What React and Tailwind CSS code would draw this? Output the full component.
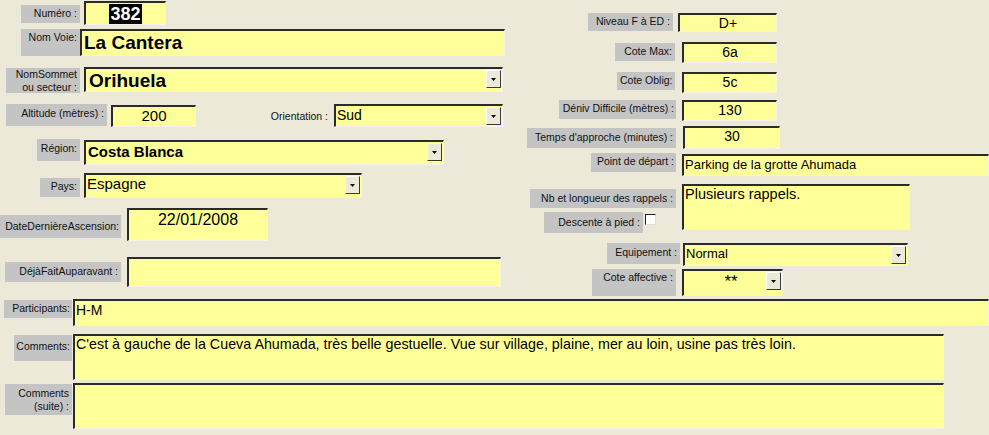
const Label = ({ className = "", children }) => (
  <div
    className={`shrink-0 whitespace-nowrap bg-[#c4c4c4] px-[3px] pt-[2px] text-right text-[10.5px] leading-[13px] text-[#111] ${className}`}
  >
    {children}
  </div>
);

const Field = ({ className = "", children }) => (
  <div
    className={`shrink-0 overflow-hidden border-t-2 border-l-2 border-r border-b border-t-[#2b2b2b] border-l-[#2b2b2b] border-r-[#f6f4ea] border-b-[#f6f4ea] bg-[#ffff99] text-black ${className}`}
  >
    {children}
  </div>
);

const DropButton = () => (
  <div className="mr-[1px] mt-[1px] flex h-[18px] w-[15px] shrink-0 items-center justify-center border border-t-white border-l-white border-r-[#3a3a3a] border-b-[#3a3a3a] bg-[#ece9d8]">
    <svg width="5" height="3" viewBox="0 0 5 3">
      <path d="M0 0h5L2.5 3z" fill="#000" />
    </svg>
  </div>
);

const Combo = ({ className = "", textClass = "", children }) => (
  <Field className={`flex ${className}`}>
    <div className={`min-w-0 flex-1 ${textClass}`}>{children}</div>
    <DropButton />
  </Field>
);

export default function App() {
  return (
    <div className="h-[435px] w-[989px] overflow-hidden bg-[#ece9d8] font-['Liberation_Sans',Arial,sans-serif]">
      <div className="flex h-[299px]">
        {/* left column */}
        <div className="flex w-[510px] shrink-0 flex-col">
          <div className="mt-[1px] flex">
            <Label className="ml-[21px] mt-[4px] h-[18px] w-[59px]">Numéro :</Label>
            <Field className="ml-[4px] flex h-[24px] w-[82px] items-start justify-center">
              <span className="mt-[1px] bg-black px-[1px] text-[18px] font-bold leading-[20px] text-white">382</span>
            </Field>
          </div>
          <div className="mt-[4px] flex">
            <Label className="ml-[21px] h-[27px] w-[59px]">Nom Voie:</Label>
            <Field className="h-[27px] w-[425px] pl-[2px] text-[19px] font-bold leading-[24px]">La Cantera</Field>
          </div>
          <div className="mt-[11px] flex">
            <Label className="ml-[6px] mt-[1px] h-[25px] w-[74px] !pt-0 leading-[12px]">
              NomSommet
              <br />
              ou secteur :
            </Label>
            <Combo className="ml-[4px] h-[25px] w-[419px]" textClass="pl-[3px] text-[19px] font-bold leading-[23px]">
              Orihuela
            </Combo>
          </div>
          <div className="mt-[11px] flex">
            <Label className="ml-[6px] h-[22px] w-[101px] !pt-[3px]">Altitude (mètres) :</Label>
            <Field className="ml-[4px] mt-[1px] h-[22px] w-[85px] text-center text-[15px] leading-[18px]">200</Field>
            <div className="w-[138px] shrink-0 pr-[6px] pt-[6px] text-right text-[10.5px] leading-[13px] text-[#111]">Orientation :</div>
            <Combo className="h-[23px] w-[169px]" textClass="pl-[1px] text-[14px] leading-[18px]">
              Sud
            </Combo>
          </div>
          <div className="mt-[12px] flex">
            <Label className="ml-[37px] h-[22px] w-[43px] !pt-[3px]">Région:</Label>
            <Combo className="ml-[4px] mt-[1px] h-[25px] w-[360px]" textClass="pl-[2px] text-[15px] font-bold leading-[19px]">
              Costa Blanca
            </Combo>
          </div>
          <div className="mt-[8px] flex">
            <Label className="ml-[40px] mt-[5px] h-[19px] w-[40px]">Pays:</Label>
            <Combo className="ml-[4px] h-[25px] w-[278px]" textClass="pl-[1px] text-[15px] leading-[18px]">
              Espagne
            </Combo>
          </div>
          <div className="mt-[10px] flex">
            <Label className="mt-[7px] h-[23px] w-[121px] !px-[2px] !pt-[5px]">DateDernièreAscension:</Label>
            <Field className="ml-[6px] h-[33px] w-[141px] text-center text-[16px] leading-[19px]">22/01/2008</Field>
          </div>
          <div className="mt-[16px] flex">
            <Label className="ml-[5px] mt-[5px] h-[20px] w-[116px] !pt-[3px]">DéjàFaitAuparavant :</Label>
            <Field className="ml-[6px] h-[30px] w-[374px]" />
          </div>
        </div>

        {/* right column */}
        <div className="flex flex-1 flex-col">
          <div className="mt-[13px] flex">
            <Label className="ml-[78px] h-[18px] w-[85px]">Niveau F à ED :</Label>
            <Field className="ml-[5px] h-[19px] w-[99px] text-center text-[14px] leading-[16px]">D+</Field>
          </div>
          <div className="mt-[10px] flex">
            <Label className="ml-[105px] mt-[1px] h-[18px] w-[60px]">Cote Max:</Label>
            <Field className="ml-[7px] h-[21px] w-[95px] text-center text-[14px] leading-[17px]">6a</Field>
          </div>
          <div className="mt-[9px] flex">
            <Label className="ml-[107px] h-[18px] w-[58px]">Cote Oblig:</Label>
            <Field className="ml-[7px] h-[21px] w-[95px] text-center text-[14px] leading-[17px]">5c</Field>
          </div>
          <div className="mt-[7px] flex">
            <Label className="ml-[49px] h-[19px] w-[117px] !px-[2px]">Déniv Difficile (mètres) :</Label>
            <Field className="ml-[6px] h-[21px] w-[95px] text-center text-[14px] leading-[17px]">130</Field>
          </div>
          <div className="mt-[5px] flex">
            <Label className="ml-[17px] mt-[2px] h-[20px] w-[149px] !pt-[3px]">Temps d'approche (minutes) :</Label>
            <Field className="ml-[7px] h-[23px] w-[97px] text-center text-[14px] leading-[17px]">30</Field>
          </div>
          <div className="mt-[4px] flex">
            <Label className="ml-[81px] h-[19px] w-[85px] !px-[2px]">Point de départ :</Label>
            <Field className="ml-[6px] mt-[1px] h-[22px] w-[307px] pl-[1px] text-[13px] leading-[17px]">
              Parking de la grotte Ahumada
            </Field>
          </div>
          <div className="mt-[8px] flex">
            <div className="flex w-[166px] shrink-0 flex-col">
              <Label className="ml-[20px] mt-[5px] h-[19px] w-[146px] !pt-[3px]">Nb et longueur des rappels :</Label>
              <div className="mt-[4px] flex">
                <Label className="ml-[34px] h-[21px] w-[99px] !pt-[4px]">Descente à pied :</Label>
                <div className="ml-[2px] mt-[2px] h-[11px] w-[11px] border-t border-l border-r border-b border-t-[#222] border-l-[#222] border-r-[#ddd] border-b-[#ddd] bg-white" />
              </div>
            </div>
            <Field className="ml-[6px] h-[46px] w-[228px] pl-[1px] text-[14.5px] leading-[17px]">Plusieurs rappels.</Field>
          </div>
          <div className="mt-[10px] flex">
            <Label className="ml-[97px] h-[21px] w-[73px] !pt-[3px]">Equipement :</Label>
            <Combo className="ml-[3px] h-[23px] w-[225px]" textClass="pl-[1px] text-[13px] leading-[18px]">
              Normal
            </Combo>
          </div>
          <div className="mt-[3px] flex">
            <Label className="ml-[82px] h-[27px] w-[84px]">Cote affective :</Label>
            <Combo className="ml-[6px] h-[27px] w-[101px]" textClass="pl-[12px] pt-[3px] text-center text-[17px] leading-[16px]">
              **
            </Combo>
          </div>
        </div>
      </div>

      {/* bottom rows */}
      <div className="flex flex-col">
        <div className="flex">
          <Label className="ml-[4px] mt-[1px] h-[18px] w-[68px] !px-[2px]">Participants:</Label>
          <Field className="ml-[1px] h-[27px] w-[916px] pl-[1px] text-[14px] leading-[18px]">H-M</Field>
        </div>
        <div className="mt-[8px] flex">
          <Label className="ml-[14px] mt-[1px] h-[26px] w-[58px] !px-[2px] !pt-[5px]">Comments:</Label>
          <Field className="ml-[1px] h-[46px] w-[871px] pl-[1px] text-[14.3px] leading-[17px]">
            C'est à gauche de la Cueva Ahumada, très belle gestuelle. Vue sur village, plaine, mer au loin, usine pas très loin.
          </Field>
        </div>
        <div className="mt-[3px] flex">
          <Label className="ml-[5px] mt-[1px] h-[31px] w-[67px] !pt-[3px] leading-[13px]">
            Comments
            <br />
            (suite) :
          </Label>
          <Field className="ml-[1px] h-[46px] w-[871px]" />
        </div>
      </div>
    </div>
  );
}
